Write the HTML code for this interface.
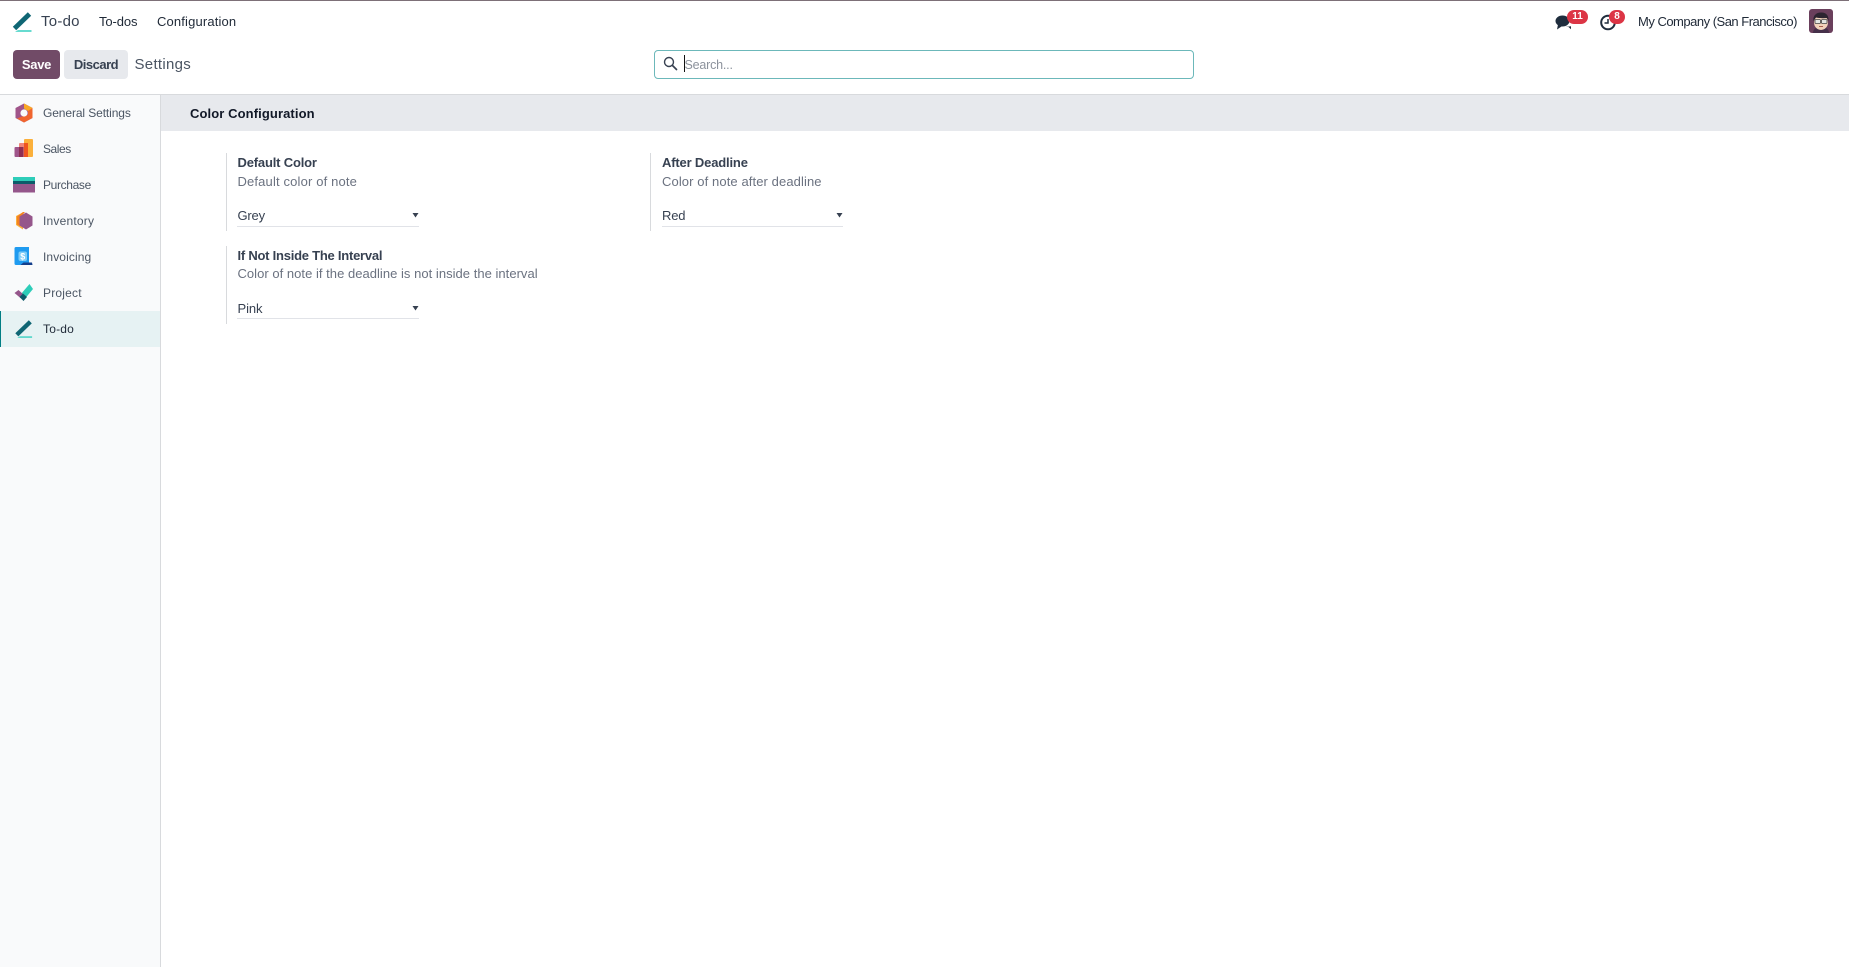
<!DOCTYPE html>
<html lang="en"><head><meta charset="utf-8"><title>Settings - To-do</title>
<style>
html,body{margin:0;padding:0;width:1849px;height:967px;overflow:hidden;background:#fff;font-family:"Liberation Sans",sans-serif;font-size:13px;color:#374151}
.a{position:absolute;white-space:nowrap}
.t{position:absolute;white-space:nowrap;line-height:18px;height:18px}
svg{position:absolute;display:block}
.b{font-weight:700}
.m{color:#6b7280}
.side{font-size:12px;color:#4b5563;left:43px}
.u{position:absolute;height:1px;background:#e1e3e8}
.v{position:absolute;width:1px;background:#d8dadd}
.badge{position:absolute;background:#dc3545;color:#fff;border-radius:9px;font-size:10px;font-weight:700;text-align:center;line-height:14px;height:14px}
</style></head><body>
<div class="a" style="left:0;top:0;width:1849px;height:1px;background:#7d7078"></div>

<svg style="left:12px;top:12px" width="21" height="20" viewBox="0 0 21 20"><path d="M2.500 16.500 17.500 2" stroke="#0f6674" stroke-width="4.800" fill="none"/><path d="M6 18.200H19.500V19.700H3z" fill="#35cfc0"/></svg>
<div class="t" style="left:41px;top:13px;font-size:15px;letter-spacing:.25px;color:#374151">To-do</div>
<div class="t" style="left:99px;top:13px;letter-spacing:-.1px;color:#1f2937">To-dos</div>
<div class="t" style="left:157px;top:13px;letter-spacing:.15px;color:#1f2937">Configuration</div>

<div class="a" style="left:13px;top:50px;width:47px;height:29px;background:#714b67;border-radius:4px;color:#fff;font-weight:700;text-align:center;line-height:29px;font-size:13px;letter-spacing:-.3px">Save</div>
<div class="a" style="left:64px;top:50px;width:64px;height:29px;background:#e7e9ed;border-radius:4px;color:#374151;font-weight:700;text-align:center;line-height:29px;font-size:13px;letter-spacing:-.5px">Discard</div>
<div class="t" style="left:134.500px;top:55px;font-size:15px;letter-spacing:.3px;color:#4b5563;margin-top:1px">Settings</div>

<div class="a" style="left:654px;top:50px;width:538px;height:27px;border:1px solid #6cb8ba;border-radius:4px;background:#fff"></div>
<svg style="left:663px;top:56px" width="15" height="15" viewBox="0 0 15 15"><circle cx="6" cy="6" r="4.500" fill="none" stroke="#374151" stroke-width="1.400"/><path d="M9.500 9.500 13.500 13.500" stroke="#374151" stroke-width="1.700" stroke-linecap="round"/></svg>
<div class="a" style="left:684px;top:55px;width:1px;height:17px;background:#111"></div>
<div class="t" style="left:684.500px;top:56px;font-size:12.500px;letter-spacing:-.2px;color:#8c929c">Search...</div>

<svg style="left:1555px;top:14px" width="20" height="18" viewBox="0 0 20 18"><ellipse cx="7.500" cy="7" rx="7" ry="5.500" fill="#1f2d3d"/><path d="M3 10.500 2 15.500 8 11.500z" fill="#1f2d3d"/><path d="M10.500 13h3l2.500 2.200v-3z" fill="#1f2d3d"/></svg>
<div class="badge" style="left:1567px;top:10px;width:21px">11</div>
<svg style="left:1599px;top:13px" width="18" height="18" viewBox="0 0 18 18"><circle cx="9" cy="9.500" r="6.800" fill="none" stroke="#1f2d3d" stroke-width="2"/><path d="M9 6V10H5.500" fill="none" stroke="#1f2d3d" stroke-width="1.500"/></svg>
<div class="badge" style="left:1609px;top:10px;width:16px">8</div>
<div class="t" style="left:1638px;top:13px;letter-spacing:-.5px;color:#1f2937">My Company (San Francisco)</div>
<svg style="left:1809px;top:9px" width="24" height="24" viewBox="0 0 24 24"><rect width="24" height="24" rx="3" fill="#6a3f5c"/><path d="M4 24c0-4 3-6 8-6s8 2 8 6z" fill="#46304a"/><ellipse cx="12" cy="13.500" rx="7" ry="7.500" fill="#f3d3bb"/><path d="M4.500 12C3.500 6 8 3 13 3.500c4.500 .2 7 3.500 6.500 8.500L18 9C14 9.500 9 9 7 8.500z" fill="#2c2430"/><rect x="6" y="10.500" width="5.500" height="4" rx="1" fill="#e4e6e3" stroke="#444" stroke-width=".8"/><rect x="12.500" y="10.500" width="5.500" height="4" rx="1" fill="#e4e6e3" stroke="#444" stroke-width=".8"/><path d="M10 17.500h4" stroke="#a8604f"/></svg>

<div class="a" style="left:0;top:94px;width:1849px;height:1px;background:#d8dadd"></div>

<!-- sidebar -->
<div class="a" style="left:0;top:95px;width:160px;height:872px;background:#f9fafb"></div>
<div class="a" style="left:160px;top:95px;width:1px;height:872px;background:#d8dadd"></div>
<div class="a" style="left:0;top:311px;width:160px;height:36px;background:#e6f2f3"></div>
<div class="a" style="left:0;top:311px;width:1px;height:36px;background:#017e84"></div>

<svg style="left:14px;top:103px" width="20" height="20" viewBox="0 0 20 20"><path d="M10 .500 18.500 5v10L10 19.500 1.500 15V5z" fill="#a0558a"/><path d="M10 .500 18.500 5v10L10 19.500 3 15.500 8 13.500 14 12V8L10 5z" fill="#f0652f"/><path d="M10 .500 18.500 5 14 8 10 5.500z" fill="#f9a825"/><circle cx="10" cy="10" r="3.600" fill="#f9fafb"/></svg>
<svg style="left:14px;top:139px" width="20" height="20" viewBox="0 0 20 20"><rect x="0.500" y="8" width="9" height="10" rx="1" fill="#a0558a"/><rect x="5" y="4" width="9" height="14" rx="1" fill="#f0857a"/><rect x="5" y="8" width="4.500" height="10" fill="#8f2e52"/><rect x="10" y="0" width="9" height="18" rx="1" fill="#fbb03b"/><rect x="10" y="4" width="4" height="14" fill="#f0551f"/></svg>
<svg style="left:13px;top:177px" width="22" height="16" viewBox="0 0 22 16"><rect y="0" width="22" height="4" fill="#2ecdb9"/><rect y="4" width="22" height="3" fill="#0d5b6a"/><rect y="7" width="22" height="8.500" fill="#95568b"/></svg>
<svg style="left:14px;top:211px" width="20" height="20" viewBox="0 0 20 20"><path d="M9.500 1 2 5v9l7 4.500z" fill="#fbb03b"/><path d="M3 5.500 9 1l2 0-4 4.500v10l-4-2z" fill="#f58220"/><path d="M12 1.500 18.500 5.500v9L12 18.500 5.500 14.500v-9z" fill="#95568b"/></svg>
<svg style="left:14px;top:247px" width="20" height="20" viewBox="0 0 20 20"><path d="M2 0h13v18H2a1.500 1.500 0 0 1-1.500-1.500V1.500A1.500 1.500 0 0 1 2 0z" fill="#1f9bf0"/><path d="M6.500 18 9.500 15.500H18L18.500 18z" fill="#143f8c"/><rect x="4.500" y="4.500" width="8.500" height="9.500" rx="2" fill="#7fcdf7"/><text x="8.700" y="12.500" font-family="Liberation Sans" font-size="9" font-weight="700" text-anchor="middle" fill="#fff">$</text></svg>
<svg style="left:14px;top:283px" width="20" height="20" viewBox="0 0 20 20"><path d="M11.500 15 19 6 15.500 1 7 11z" fill="#2ecdb9"/><path d="M.500 10 4.500 7 10 12 6.500 15z" fill="#95568b"/><path d="M5.500 14 9 10.500 13 14 9.500 18z" fill="#0d5b6a"/></svg>
<svg style="left:14px;top:320px" width="20" height="18" viewBox="0 0 21 20"><path d="M2.500 16.500 17.500 2" stroke="#0f6674" stroke-width="4.800" fill="none"/><path d="M6 18.200H19.500V19.700H3z" fill="#35cfc0"/></svg>

<div class="t side" style="top:104px;letter-spacing:-.1px">General Settings</div>
<div class="t side" style="top:140px;letter-spacing:-.45px">Sales</div>
<div class="t side" style="top:176px;letter-spacing:-.35px">Purchase</div>
<div class="t side" style="top:212px;letter-spacing:.2px">Inventory</div>
<div class="t side" style="top:248px;letter-spacing:.1px">Invoicing</div>
<div class="t side" style="top:284px;letter-spacing:.2px">Project</div>
<div class="t side" style="top:320px;letter-spacing:.2px;color:#1f2937">To-do</div>

<!-- section -->
<div class="a" style="left:161px;top:95px;width:1688px;height:36px;background:#e7e9ed"></div>
<div class="t b" style="left:190px;top:105px;letter-spacing:.1px;color:#111827">Color Configuration</div>

<div class="v" style="left:226px;top:153px;height:78px"></div>
<div class="t b" style="left:237.500px;top:154px;letter-spacing:-.18px;color:#374151">Default Color</div>
<div class="t m" style="left:237.500px;top:173px;letter-spacing:.15px">Default color of note</div>
<div class="t" style="left:237.500px;top:207px;letter-spacing:-.2px;color:#374151">Grey</div>
<div class="u" style="left:237px;top:226px;width:182px"></div>
<svg style="left:412px;top:213px" width="7" height="5" viewBox="0 0 7 5"><path d="M.500 0h6L3.500 4.500z" fill="#374151"/></svg>

<div class="v" style="left:650px;top:153px;height:78px"></div>
<div class="t b" style="left:662px;top:154px;letter-spacing:-.17px;color:#374151">After Deadline</div>
<div class="t m" style="left:662px;top:173px;letter-spacing:.1px">Color of note after deadline</div>
<div class="t" style="left:662px;top:207px;letter-spacing:-.2px;color:#374151">Red</div>
<div class="u" style="left:662px;top:226px;width:181px"></div>
<svg style="left:836px;top:213px" width="7" height="5" viewBox="0 0 7 5"><path d="M.500 0h6L3.500 4.500z" fill="#374151"/></svg>

<div class="v" style="left:226px;top:246px;height:78px"></div>
<div class="t b" style="left:237.500px;top:247px;letter-spacing:-.24px;color:#374151">If Not Inside The Interval</div>
<div class="t m" style="left:237.500px;top:265px;letter-spacing:.03px">Color of note if the deadline is not inside the interval</div>
<div class="t" style="left:237.500px;top:300px;letter-spacing:-.1px;color:#374151">Pink</div>
<div class="u" style="left:237px;top:318px;width:182px"></div>
<svg style="left:412px;top:306px" width="7" height="5" viewBox="0 0 7 5"><path d="M.500 0h6L3.500 4.500z" fill="#374151"/></svg>
</body></html>
